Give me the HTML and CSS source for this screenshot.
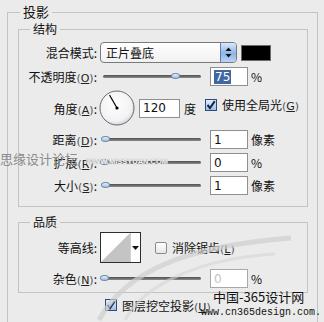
FILE: index.html
```html
<!DOCTYPE html>
<html lang="zh-CN">
<head>
  <meta charset="UTF-8">
  <meta name="viewport" content="width=device-width, initial-scale=1.0">
  <title>投影</title>
  <link rel="stylesheet" href="styles.css">
</head>
<body>
  <fieldset class="group outer">
    <legend>投影</legend>

    <fieldset class="group inner structure">
      <legend>结构</legend>

      <div class="row row-blend">
        <label class="lbl">混合模式:</label>
        <div class="select">
          <span class="select-text">正片叠底</span>
          <span class="select-btn">
            <svg width="7" height="11" viewBox="0 0 7 11"><path d="M3.5 0.5 L6.5 4 L0.5 4 Z M3.5 10.5 L6.5 7 L0.5 7 Z" fill="#111"/></svg>
          </span>
        </div>
        <span class="swatch"></span>
      </div>

      <div class="row row-opacity">
        <label class="lbl">不透明度<span class="key">(<u>O</u>)</span>:</label>
        <div class="slider"><span class="thumb" style="left:75%"></span></div>
        <span class="field"><span class="sel">75</span></span>
        <span class="unit">%</span>
      </div>

      <div class="row row-angle">
        <label class="lbl">角度<span class="key">(<u>A</u>)</span>:</label>
        <svg class="dial" width="36" height="36" viewBox="0 0 36 36">
          <defs>
            <radialGradient id="dialFill" cx="45%" cy="40%" r="60%">
              <stop offset="0" stop-color="#ffffff"/>
              <stop offset="0.8" stop-color="#f2f2f4"/>
              <stop offset="1" stop-color="#d4d6dc"/>
            </radialGradient>
          </defs>
          <circle cx="18" cy="18" r="17" fill="url(#dialFill)" stroke="#6a6a6a" stroke-width="1"/>
          <line x1="18" y1="18" x2="10.5" y2="5" stroke="#000" stroke-width="1.2"/>
          <circle cx="18" cy="18" r="1.6" fill="#000"/>
        </svg>
        <span class="field field-wide">120</span>
        <span class="unit unit-deg">度</span>
        <span class="check on">
          <svg width="10" height="10" viewBox="0 0 10 10"><path d="M1.5 5 L4 8 L8.8 1.2" fill="none" stroke="#15264a" stroke-width="2"/></svg>
        </span>
        <span class="check-label">使用全局光<span class="key">(<u>G</u>)</span></span>
      </div>

      <div class="row row-tight">
        <label class="lbl">距离<span class="key">(<u>D</u>)</span>:</label>
        <div class="slider"><span class="thumb" style="left:1%"></span></div>
        <span class="field">1</span>
        <span class="unit">像素</span>
      </div>

      <div class="row row-tight">
        <label class="lbl">扩展<span class="key">(<u>R</u>)</span>:</label>
        <div class="slider"><span class="thumb" style="left:0%"></span></div>
        <span class="field">0</span>
        <span class="unit">%</span>
      </div>

      <div class="row row-tight">
        <label class="lbl">大小<span class="key">(<u>S</u>)</span>:</label>
        <div class="slider"><span class="thumb" style="left:1%"></span></div>
        <span class="field">1</span>
        <span class="unit">像素</span>
      </div>
    </fieldset>

    <fieldset class="group inner quality">
      <legend>品质</legend>

      <div class="row row-contour">
        <label class="lbl">等高线:</label>
        <div class="contour">
          <svg class="contour-preview" width="29" height="29" viewBox="0 0 29 29">
            <rect width="29" height="29" fill="#fff"/>
            <polygon points="0,29 29,0 29,29" fill="#c4c4c4"/>
          </svg>
          <span class="contour-arrow">
            <svg width="7" height="4" viewBox="0 0 7 4"><path d="M0 0 L7 0 L3.5 4 Z" fill="#111"/></svg>
          </span>
        </div>
        <span class="check off"></span>
        <span class="check-label">消除锯齿<span class="key">(<u>L</u>)</span></span>
      </div>

      <div class="row row-noise">
        <label class="lbl">杂色<span class="key">(<u>N</u>)</span>:</label>
        <div class="slider"><span class="thumb" style="left:0%"></span></div>
        <span class="field faded">0</span>
        <span class="unit">%</span>
      </div>
    </fieldset>

    <div class="row row-knockout">
      <span class="check on">
        <svg width="10" height="10" viewBox="0 0 10 10"><path d="M1.5 5 L4 8 L8.8 1.2" fill="none" stroke="#15264a" stroke-width="2"/></svg>
      </span>
      <span class="check-label">图层挖空投影<span class="key">(<u>U</u>)</span></span>
    </div>
  </fieldset>

  <!-- watermarks printed over the screenshot -->
  <span class="wm wm-forum">思缘设计论坛</span>
  <span class="wm wm-forum-url">WWW.MISSYUAN.COM</span>
  <svg class="wm wm-swoosh" width="200" height="90" viewBox="0 0 200 90">
    <path d="M4 88 C30 40 90 14 196 6" fill="none" stroke="#cfcfcf" stroke-width="5" opacity="0.7"/>
    <path d="M30 88 C50 50 110 26 180 22" fill="none" stroke="#d6d6d6" stroke-width="3" opacity="0.6"/>
  </svg>
  <span class="wm wm-site">中国-365设计网</span>
  <span class="wm wm-site-url">www.cn365design.com.</span>
</body>
</html>
```

FILE: styles.css
```css
body {
  margin: 0;
  padding: 4px 0 0;
  height: 322px;
  box-sizing: border-box;
  overflow: hidden;
  position: relative;
  background: #ebebeb;
  font-family: "Noto Sans CJK SC", "DejaVu Sans", sans-serif;
  font-size: 12px;
  color: #111;
}
.group {
  margin: 0;
  padding: 0;
  min-width: 0;
  border: 1px solid #c3c3c3;
}
.group legend {
  padding: 0 3px;
  line-height: 16px;
  font-size: 12px;
}
.outer {
  width: 311px;
  box-sizing: border-box;
  margin-left: 7px;
  padding-bottom: 20px;
}
.outer > legend {
  margin-left: 12px;
  font-size: 13px;
}
.inner {
  margin: 1px 9px 0 10px;
}
.inner > legend {
  margin-left: 11px;
}
.structure {
  padding-bottom: 10px;
}
.quality {
  margin-top: 7px;
  padding-bottom: 3px;
}

.row {
  display: flex;
  align-items: center;
  height: 21px;
}
.row-blend {
  margin-top: 5px;
}
.row-opacity {
  margin-top: 3px;
}
.row-angle {
  margin-top: 3px;
  height: 36px;
}
.row-tight {
  margin-top: 2px;
}
.row-angle + .row-tight {
  margin-top: 3px;
}
.row-contour {
  margin-top: 2px;
  height: 31px;
}
.row-noise {
  margin-top: 5px;
}
.row-knockout {
  margin-top: 4px;
  height: 16px;
  padding-left: 97px;
}

.lbl {
  width: 78px;
  flex: none;
  text-align: right;
  white-space: nowrap;
}
.key {
  font-family: "DejaVu Sans", sans-serif;
  font-size: 11px;
  color: #555;
}
.key u {
  color: #222;
}

.select {
  margin-left: 3px;
  width: 137px;
  height: 21px;
  box-sizing: border-box;
  display: flex;
  align-items: center;
  border: 1px solid #7a7a7a;
  border-radius: 4px;
  background: linear-gradient(#ffffff, #f1f1f1);
  overflow: hidden;
}
.select-text {
  flex: 1;
  padding-left: 5px;
}
.select-btn {
  width: 15px;
  height: 100%;
  display: flex;
  align-items: center;
  justify-content: center;
  border-left: 1px solid #5a7fb0;
  background: linear-gradient(#d9e8fa, #8db5e6 55%, #b9d4f4);
}
.swatch {
  margin-left: 4px;
  width: 30px;
  height: 16px;
  box-sizing: border-box;
  background: #000;
  border: 1px solid #6b6b6b;
}

.slider {
  position: relative;
  margin-left: 4px;
  width: 100px;
  height: 9px;
  flex: none;
}
.slider::before {
  content: "";
  position: absolute;
  left: 2px;
  right: 0;
  top: 3px;
  height: 3px;
  border-radius: 2px;
  background: linear-gradient(#4e4e4e, #8c8c8c);
}
.thumb {
  position: absolute;
  top: 1px;
  width: 9px;
  height: 6px;
  margin-left: -1px;
  border: 1px solid #6b88ad;
  border-radius: 50%;
  background: linear-gradient(#eef4fc, #9db9dd);
  box-sizing: border-box;
}
.row-opacity .thumb {
  margin-left: -5px;
}

.field {
  margin-left: 9px;
  width: 38px;
  height: 19px;
  box-sizing: border-box;
  flex: none;
  display: flex;
  align-items: center;
  padding-left: 3px;
  background: #fff;
  border: 1px solid #8f8f8f;
  font-family: "DejaVu Sans", sans-serif;
  font-size: 12px;
}
.field-wide {
  margin-left: 4px;
  width: 41px;
}
.field.faded {
  color: #c2c2c2;
  border-color: #a8a8a8;
}
.sel {
  background: #3f68a3;
  color: #fff;
  padding: 0 1px;
  line-height: 14px;
}
.unit {
  margin-left: 3px;
}
.unit-deg {
  margin-left: 4px;
}

.dial {
  margin-left: 2px;
  flex: none;
}

.check {
  width: 12px;
  height: 12px;
  box-sizing: border-box;
  flex: none;
  display: flex;
  align-items: center;
  justify-content: center;
}
.row-angle .check {
  margin-left: 9px;
  margin-top: -7px;
}
.row-angle .check-label {
  margin-top: -7px;
}
.check.on {
  border: 1px solid #2b4c7a;
  background: linear-gradient(#e4eefb, #9fc0e8);
}
.check.off {
  margin-left: 14px;
  border: 1px solid #8a8a8a;
  border-radius: 2px;
  background: linear-gradient(#ffffff, #e6e6e6);
}
.check-label {
  margin-left: 5px;
  white-space: nowrap;
}

.contour {
  margin-left: 3px;
  width: 41px;
  height: 31px;
  box-sizing: border-box;
  flex: none;
  display: flex;
  border: 1px solid #2e2e2e;
  background: #fff;
}
.contour-preview {
  display: block;
}
.contour-arrow {
  flex: 1;
  display: flex;
  align-items: center;
  justify-content: center;
  border-left: 1px solid #d0d0d0;
}

.wm {
  position: absolute;
  white-space: nowrap;
}
.wm-forum {
  left: 0;
  top: 149px;
  font-size: 13px;
  color: #8c8c8c;
}
.wm-forum-url {
  left: 86px;
  top: 157px;
  font-family: "Liberation Sans", sans-serif;
  font-weight: bold;
  font-size: 7.5px;
  color: #f4f4f4;
  text-shadow: 0 0 1px #777;
}
.wm-swoosh {
  left: 95px;
  top: 232px;
}
.wm-site {
  left: 213px;
  top: 287px;
  font-size: 13px;
  color: #111;
}
.wm-site-url {
  left: 201px;
  top: 307px;
  font-family: "Liberation Mono", monospace;
  font-size: 10px;
  color: #111;
}
```
